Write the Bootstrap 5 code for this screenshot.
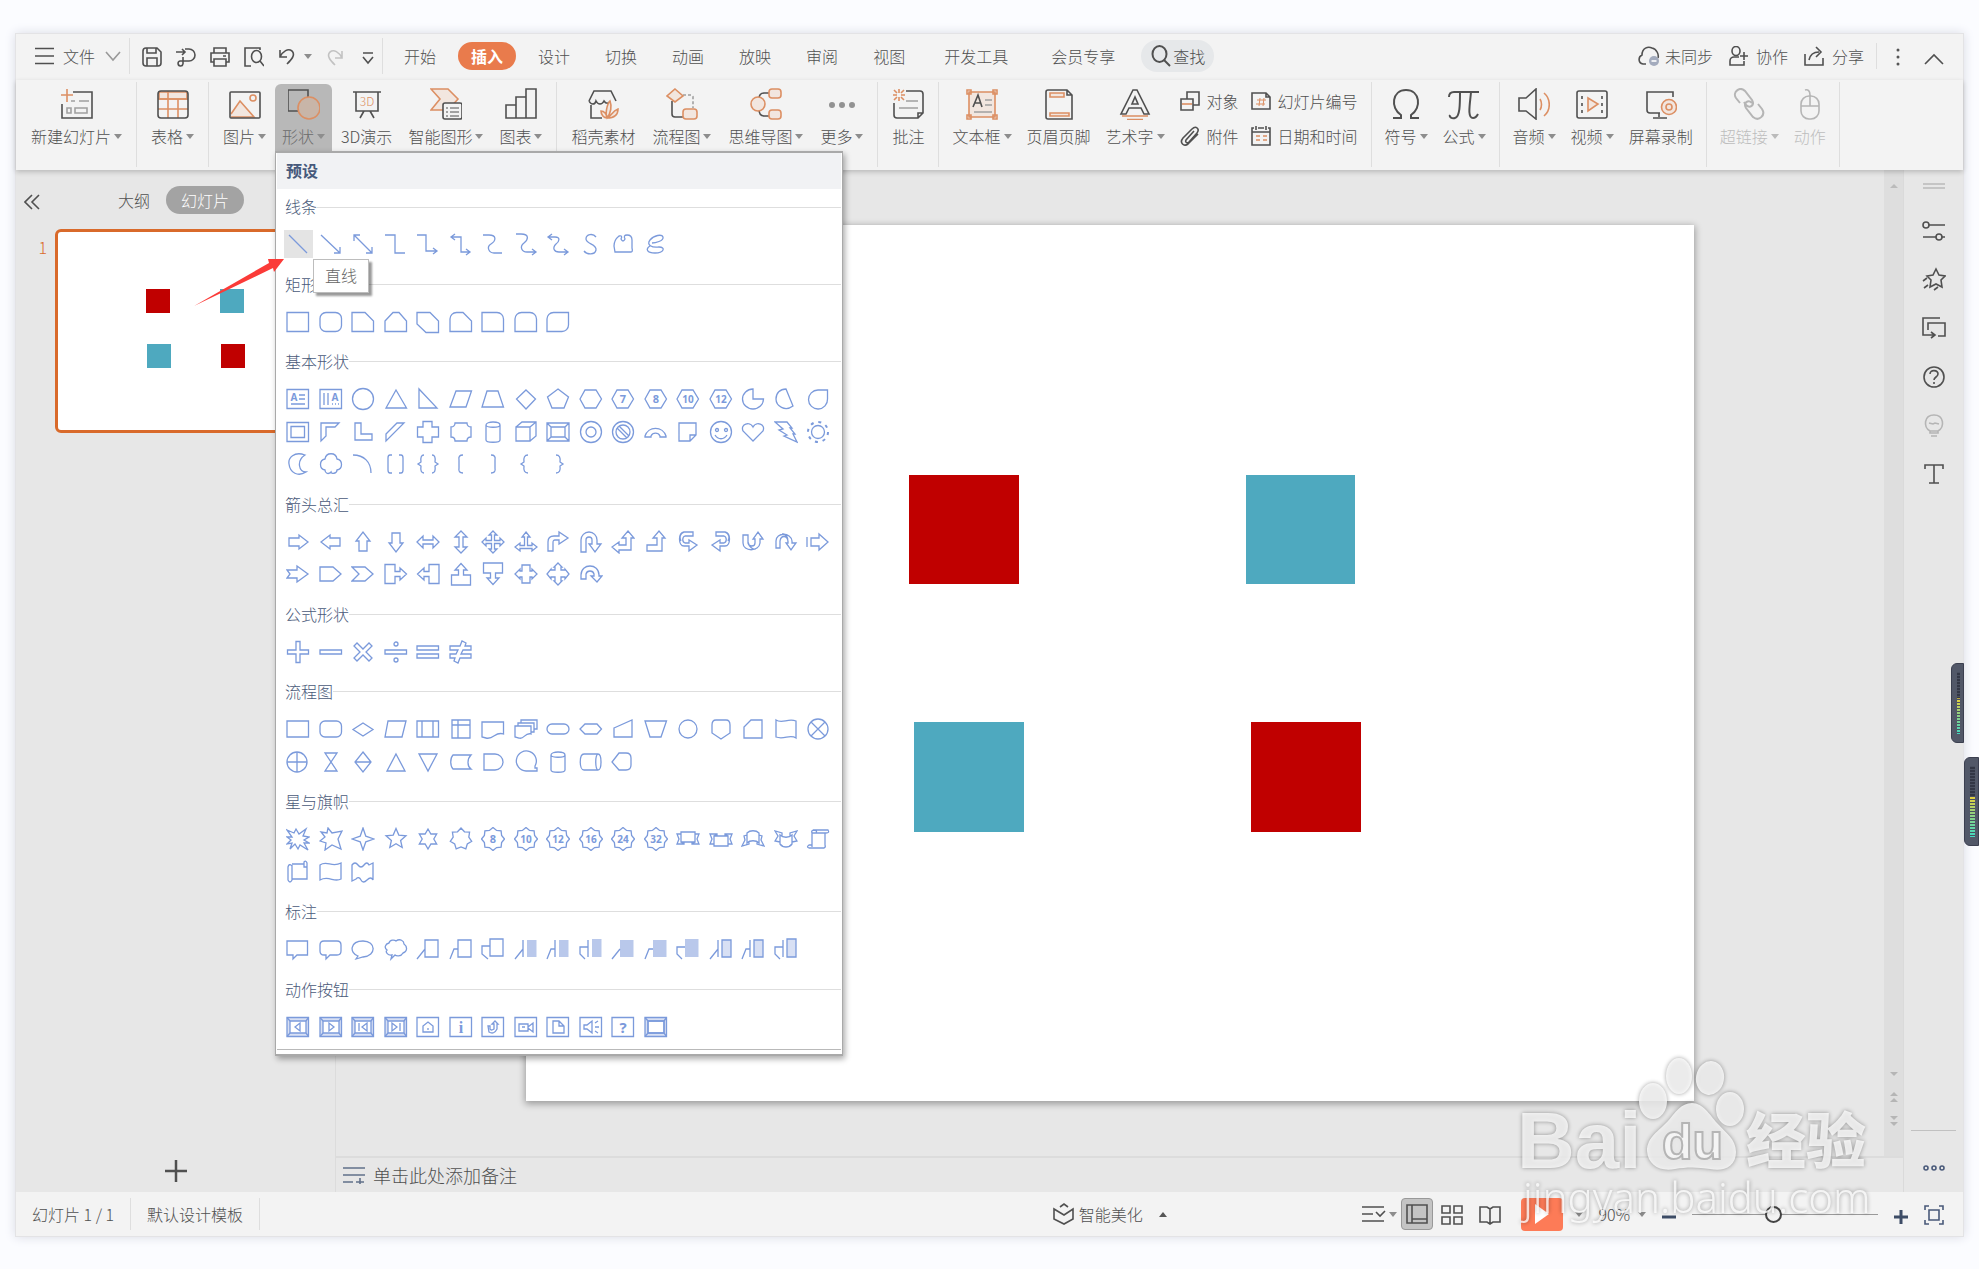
<!DOCTYPE html>
<html lang="zh-CN">
<head>
<meta charset="utf-8">
<meta name="viewport" content="width=device-width, initial-scale=1">
<title>演示文稿</title>
<link href="https://cdn.jsdelivr.net/npm/bootstrap@5.3.0/dist/css/bootstrap.min.css" rel="stylesheet">
<style>
:root{--ink:#505050;--accent:#d96a2b;--bar:#f3f3f3;--pane:#e7e7e7;--rule:#dedede;--navy:#4a5a7a}
body{background:#fbfcff;color:var(--ink);font:16px/20px "Noto Sans CJK SC","Noto Sans",sans-serif;font-weight:300;padding:33px 15px 32px;min-height:100vh;overflow:hidden}
button,a.tab-item{color:inherit;text-decoration:none;background:none;border:0;padding:0;font:inherit;white-space:nowrap}
svg{fill:none;stroke:var(--ink);stroke-width:1.6;flex:none}
svg text{stroke:none}
.app-window{height:calc(100vh - 65px);background:var(--pane);border:1px solid #e3e3e5;box-shadow:0 0 10px #d9dbe4}
.menu-strip{height:46px;background:var(--bar);padding:0 18px 2px 19px}
.quick{gap:14px}
.vline{width:1px;background:var(--rule);align-self:stretch}
.tabs{gap:9px}
.tab-item{padding:4px 13px!important;border-radius:14px}
.tab-item.wide{padding:4px 17px!important}
.tab-item.current{background:#e97b4c;color:#fff;font-weight:700}
.find{height:32px;border-radius:16px;background:#e6e8ea!important;padding:0 9px 0 10px!important}
.caret-sm{display:inline-block;border:4px solid transparent;border-top:5px solid #8d8d8d;border-bottom:0;margin-left:3px;vertical-align:4px}
.caret-sm.up{border-top:0;border-bottom:5px solid #555}
.ribbon{height:90px;background:var(--bar);box-shadow:0 2px 5px #0003;position:relative;z-index:5;padding:2px 0 3px}
.tool-group{padding:2px 7px 0;gap:2px;border-right:1px solid var(--rule)}
.tool-group.first{padding-left:8px}
.tool-group.snug{padding:2px 6px 0;gap:1px}
.tool-group.roomy{gap:3px}
.tool{height:68px;padding:4px 7px 5px!important;display:flex;flex-direction:column;align-items:center;gap:6px;border-radius:6px 6px 0 0;flex:none}
.tool.pressed{background:#b8b8b8;color:#6b6b6b}
.tool svg{width:32px;height:32px}
.tool:disabled{color:#bdbdbd}
.tool:disabled svg{stroke:#b5b5b5}
.stack{padding:7px 7px 0;gap:15px}
.stack button{gap:7px}
.o{stroke:#dc8f63}.of{stroke:#dc8f63;fill:#f2e6df}.g{stroke:#a0a0a0}
.shape-menu{left:0;top:67px;width:568px;border:1px solid #a9a9a9;border-width:2px 1px;border-radius:0;padding:0 0 4px;background:#fff;box-shadow:2px 3px 6px #0005;margin:0;font-size:16px;color:var(--navy)}
.menu-head{background:#f1f2f4;height:36px;line-height:34px;padding-left:9px;font-weight:700;color:#46597b;margin:0 1px}
.section-name{height:36px;display:flex;align-items:center;padding-left:9px;margin:0}
.section-name::after{content:"";flex:1;height:1px;background:#dedede;margin-right:1px}
.shape-grid{display:grid;grid-template-columns:repeat(17,1fr);padding:3px 8px 6px 6px}
.shape-grid button{aspect-ratio:1;display:flex;align-items:center;justify-content:center;padding:2px}
.shape-grid span{width:100%;height:100%;display:flex;align-items:center;justify-content:center}
.shape-grid svg{width:24px;height:24px;stroke:#7b9adb;stroke-width:1.3}
.shape-grid .hover{background:#e4e4e4}
.shape-grid text{fill:#7b9adb;font:700 9px "Noto Sans",sans-serif;text-anchor:middle}
.shape-grid .f{fill:#b9c8eb;stroke:none}.shape-grid .lf{fill:#d8e0f4}
.menu-foot{border-top:1px solid #b9b9b9;margin:0 1px}
.hint{position:absolute;left:37px;top:106px;width:56px;height:34px;line-height:31px;text-align:center;background:#fff;border:1px solid #bdbdbd;box-shadow:3px 3px 2px #0006;color:#666}
.work{min-height:0}
.side-pane{width:320px;border-right:1px solid #dcdcdc}
.side-top{height:59px;padding:0 0 0 8px}
.pill{background:#a3a3a3!important;color:#fff!important;border-radius:14px;height:28px;padding:0 15px!important}
.thumb{width:270px;background:#fff;border:3px solid var(--accent);border-radius:6px;padding:2px 3px}
.face{position:relative;background:#fff;aspect-ratio:4/3}
.sq{position:absolute;width:9.4%;aspect-ratio:1}
.sq.r{background:#c00000}.sq.t{background:#4ea9bf}
.sq.a{left:32.8%;top:28.5%}.sq.b{left:61.6%;top:28.5%}.sq.c{left:33.2%;top:56.7%}.sq.d{left:62.1%;top:56.7%}
.page-one{width:75.5%;box-shadow:0 2px 7px 1px #0005}
.scroller{width:19px;background:#dedede}
.notes{height:36px;border-top:2px solid #dcdcdc;font-size:18px;padding-left:7px}
.tools-right{width:60px;border-left:1px solid #dadada}
.tools-right svg{width:24px;height:24px}
.status{height:44px;background:var(--bar)}
.status .vline{margin:6px 0}
.beautify{margin:0 10% 0 auto}
.viewbtn.on{background:#c4c4c4;border:1px solid #999;border-radius:4px}
.play{width:42px;height:33px;background:#fd7b57!important;border-radius:4px}
.zoom{appearance:none;width:186px;height:18px;background:linear-gradient(#999,#999) center/100% 1px no-repeat}
.zoom::-webkit-slider-thumb{appearance:none;width:17px;height:17px;border:2px solid #444;border-radius:50%;background:#f3f3f3}
.over{position:absolute;z-index:20;pointer-events:none}
.pointer{left:190px;top:255px;width:98px;height:56px}
.brand{right:89px;bottom:34px;width:380px;height:180px;filter:drop-shadow(0 0 2px #0007)}
.meter{width:15px;background:#525868;border:1px solid #3c4050;border-radius:6px 0 0 6px;padding:8px 3px 8px 5px}
.meter.m1{right:15px;top:663px;width:13px;height:80px}.meter.m2{right:0;top:757px;height:89px}
.meter i{display:block;height:100%;background:repeating-linear-gradient(#4a5060 0 1px,#0000 1px 3px),linear-gradient(#333745 42%,#e8d03b 43%,#9ad07a 65%,#42d6bf)}
</style>
<script src="https://cdn.jsdelivr.net/npm/bootstrap@5.3.0/dist/js/bootstrap.bundle.min.js"></script>
</head>
<body>
<main class="app-window d-flex flex-column">
<header class="menu-strip d-flex align-items-center">
  <button class="d-flex align-items-center"><svg width="20" height="20"><path d="M0 2.500H19M0 10H19M0 17.500H19"/></svg><span class="ms-2">文件</span><svg class="ms-2" width="18" height="12" style="stroke:#999"><path d="M3 2l7 8 7-8"/></svg></button>
  <span class="vline my-1 ms-2 me-2"></span>
  <div class="quick d-flex align-items-center ms-1">
    <button aria-label="保存"><svg width="20" height="20"><path d="M4 1H15L19 5V16a3 3 0 0 1-3 3H4a3 3 0 0 1-3-3V4a3 3 0 0 1 3-3ZM5 19V11H15V19M5 1V6H14V1"/></svg></button>
    <button aria-label="输出"><svg width="20" height="20"><path d="M0 5H9M6 2l3 3-3 3M9 2h4a6 6 0 0 1 0 12H7M7 17V10M7 14H4a2.500 2.500 0 1 0 3 3"/></svg></button>
    <button aria-label="打印"><svg width="20" height="20"><path d="M4 6V1H16V6M4 15H1V6H19V15H16M4 12H16V19H4ZM13 9h3"/></svg></button>
    <button aria-label="预览"><svg width="20" height="20"><path d="M7 19H1V1H16V3M16 14l4 5"/><ellipse cx="12.500" cy="9.500" rx="5" ry="6"/></svg></button>
    <button aria-label="撤销" class="d-flex align-items-center"><svg width="18" height="20"><path d="M2 4V11H9M2 11C5 5 10 2 14 5C18 9 13 14 9 18"/></svg><span class="caret-sm ms-2"></span></button>
    <button aria-label="恢复"><svg width="18" height="20" style="stroke:#c2c2c2"><path d="M16 4V11H9M16 11C13 5 8 2 4 5C0 9 5 14 9 18"/></svg></button>
    <button aria-label="更多" class="ms-1"><svg width="12" height="16"><path d="M1 3H11M1 7l5 6 5-6"/></svg></button>
  </div>
  <span class="vline my-1 ms-2"></span>
  <nav class="tabs d-flex align-items-center ms-2">
    <a class="tab-item" href="#">开始</a><a class="tab-item current" href="#">插入</a><a class="tab-item" href="#">设计</a><a class="tab-item" href="#">切换</a><a class="tab-item" href="#">动画</a><a class="tab-item" href="#">放映</a><a class="tab-item" href="#">审阅</a><a class="tab-item" href="#">视图</a><a class="tab-item wide" href="#">开发工具</a><a class="tab-item wide" href="#">会员专享</a>
    <button class="find d-flex align-items-center"><svg width="22" height="22" style="stroke-width:2"><ellipse cx="8.500" cy="9" rx="7" ry="8"/><path d="M13 15l6 6"/></svg>查找</button>
  </nav>
  <div class="d-flex align-items-center ms-auto gap-3">
    <button class="d-flex align-items-center gap-1"><svg width="23" height="20"><path d="M8 18H5C0 17 0 11 4 9C4 2 10 0 14 2C19 3 21 9 20 12"/><circle cx="16" cy="15" r="5" fill="#a3abbd" stroke="none"/><path d="M13.500 15h5" stroke="#fff"/></svg>未同步</button>
    <button class="d-flex align-items-center gap-2"><svg width="19" height="20"><ellipse cx="7" cy="5" rx="4" ry="4.500"/><path d="M10 11H5a4 4 0 0 0-4 4V19H15V15M15 6v8M11 10h8"/></svg>协作</button>
    <button class="d-flex align-items-center gap-2"><svg width="20" height="20"><path d="M1 8V19H19V12M5 14C6 9 9 6 15 6M12 1l5 5-5 5"/></svg>分享</button>
    <span class="vline" style="height:26px;align-self:auto;margin-left:-4px"></span>
    <button aria-label="选项"><svg width="10" height="22" style="fill:#555;stroke:none"><circle cx="5" cy="4" r="1.500"/><circle cx="5" cy="11" r="1.500"/><circle cx="5" cy="18" r="1.500"/></svg></button>
    <button aria-label="收起" class="ms-1"><svg width="22" height="14"><path d="M2 12l9-9 9 9"/></svg></button>
  </div>
</header>

<div class="ribbon d-flex">
  <div class="tool-group first d-flex"><button class="tool"><svg viewBox="0 0 32 32"><path d="M12 4H31V30H1V16"/><path class="g" d="M18 13H28M10 13H14M14 20H26V25H14ZM6 20h4v5H6Z"/><path class="o" d="M6 1V14M0 7H12"/></svg><span>新建幻灯片<i class="caret-sm"></i></span></button></div>
  <div class="tool-group d-flex"><button class="tool"><svg viewBox="0 0 32 32"><path class="of" d="M2 4H30V11H2Z" stroke="none"/><path class="o" d="M1 11H31M1 21H31M11 3V30M21 11V30"/><rect x="1" y="3" width="30" height="27" rx="3"/></svg><span>表格<i class="caret-sm"></i></span></button></div>
  <div class="tool-group d-flex">
    <button class="tool"><svg viewBox="0 0 32 32"><path class="of" d="M2 26L11 13L25 29H2"/><circle class="o" cx="24" cy="10" r="3"/><rect x="1" y="4" width="30" height="26" rx="1"/></svg><span>图片<i class="caret-sm"></i></span></button>
    <div class="position-relative">
      <button class="tool pressed" aria-expanded="true"><svg viewBox="0 0 32 32"><path d="M20 10V2H0V23H10"/><ellipse class="o" cx="21" cy="20" rx="11" ry="11" fill="#c8b5a8"/></svg><span>形状<i class="caret-sm"></i></span></button>
      <div class="dropdown-menu show shape-menu" id="shapes"><div class="menu-head">预设</div></div>
    </div>
    <button class="tool"><svg viewBox="0 0 32 32"><path d="M2 4H30M5 4V23H27V4M13 23l-4 7M19 23l4 7"/><text x="16" y="18" text-anchor="middle" font-size="12" fill="#dc8f63">3D</text></svg><span>3D演示</span></button>
    <button class="tool"><svg viewBox="0 0 32 32"><path class="of" d="M1 1H18L28 11L18 22H1L10 11Z"/><rect x="13" y="15" width="19" height="16" rx="2" fill="#f3f3f3"/><path d="M16 20h2M20 20h9M16 24h2M20 24h9M16 28h2M20 28h9" stroke-width="1"/></svg><span>智能图形<i class="caret-sm"></i></span></button>
    <button class="tool"><svg viewBox="0 0 32 32"><path d="M1 30V17H11V30ZM11 30V9H21V30ZM21 30V1H31V30Z"/></svg><span>图表<i class="caret-sm"></i></span></button>
  </div>
  <div class="tool-group roomy d-flex">
    <button class="tool"><svg viewBox="0 0 32 32"><path d="M2 13L7 3H24L29 13M2 13C4 17 8 17 9 13C11 17 15 17 17 13C19 16 22 16 23 13M4 17V30H15"/><path class="of" d="M20 30C18 26 20 16 23 13C25 18 24 25 20 30ZM20 30C24 29 25 23 31 21C31 27 27 30 20 30ZM20 30C20 26 17 23 14 23C14 27 17 30 20 30Z"/></svg><span>稻壳素材</span></button>
    <button class="tool"><svg viewBox="0 0 32 32"><path d="M6 13V26a3 3 0 0 0 3 3H17"/><path d="M17 7H25a2 2 0 0 1 2 2V20" class="g" stroke-dasharray="3 2"/><path class="of" d="M9 1L17 8L9 14L1 8Z"/><rect class="of" x="17" y="21" width="14" height="10" rx="3"/></svg><span>流程图<i class="caret-sm"></i></span></button>
    <button class="tool"><svg viewBox="0 0 32 32"><path d="M19 5H14C10 5 9 7 9 11M9 21C9 26 11 28 14 28H19"/><ellipse class="of" cx="8" cy="16" rx="7" ry="7"/><rect class="of" x="19" y="1" width="12" height="9" rx="3"/><rect class="of" x="19" y="22" width="12" height="9" rx="3"/></svg><span>思维导图<i class="caret-sm"></i></span></button>
    <button class="tool"><svg viewBox="0 0 32 32" style="fill:#929292;stroke:none"><circle cx="6" cy="17" r="3"/><circle cx="16" cy="17" r="3"/><circle cx="26" cy="17" r="3"/></svg><span>更多<i class="caret-sm"></i></span></button>
  </div>
  <div class="tool-group d-flex"><button class="tool"><svg viewBox="0 0 32 32"><path d="M14 3H28a3 3 0 0 1 3 3V25L26 30H5a3 3 0 0 1-3-3V15M31 25H26V30"/><path class="g" d="M14 13H26M7 20H26"/><path class="o" d="M7 1V5M7 9v4M1 7H5M9 7h4M2 2l3 3M9 9l3 3M12 2L9 5M5 9l-3 3"/></svg><span>批注</span></button></div>
  <div class="tool-group snug d-flex">
    <button class="tool"><svg viewBox="0 0 32 32"><path class="of" d="M3 4H29V29H3Z"/><path class="o" d="M1 2h4v4H1ZM27 2h4v4H27ZM1 27h4v4H1ZM27 27h4v4H27Z"/><path d="M7 19L12 7L16 19M9 15H15"/><path class="g" d="M19 12h7M19 17h7M8 24H26"/></svg><span>文本框<i class="caret-sm"></i></span></button>
    <button class="tool"><svg viewBox="0 0 32 32"><path d="M5 2H24L29 7V31H5a2 2 0 0 1-2-2V4a2 2 0 0 1 2-2ZM24 2V7H29"/><path class="of" d="M7 5H21V9H7ZM7 25H26V28H7Z"/></svg><span>页眉页脚</span></button>
    <button class="tool"><svg viewBox="0 0 32 32"><path d="M14 2H18L30 26H25L22 20H10L7 26H2ZM13 16H19L16 9Z"/><path class="o" d="M3 28H29M8 31.500H24"/></svg><span>艺术字<i class="caret-sm"></i></span></button>
    <div class="stack d-flex flex-column">
      <button class="d-flex align-items-center"><svg width="20" height="20"><path d="M7 8V1H19V14H13M1 8H13V19H1Z"/><path class="o" d="M2 13H12"/></svg>对象</button>
      <button class="d-flex align-items-center"><svg width="20" height="20"><path d="M14 5L6 14C5 16 7 18 9 16L17 7C20 3 16-1 12 3L3 12C-1 17 4 21 8 18L18 8"/></svg>附件</button>
    </div>
    <div class="stack d-flex flex-column ps-1">
      <button class="d-flex align-items-center"><svg width="20" height="20"><path d="M1 2H15L19 6V18H1ZM15 2V6H19"/><path class="o" stroke-width="1" d="M8 15L9 7M12 15l1-8M6 9h9M5 13h9"/></svg>幻灯片编号</button>
      <button class="d-flex align-items-center"><svg width="20" height="20"><path d="M5 4V0M15 4V0M3 2H1V19H19V2H17M7 2h6M1 6H19"/><path class="o" d="M5 10h4M12 10h4M5 14h4M12 14h4"/></svg>日期和时间</button>
    </div>
  </div>
  <div class="tool-group snug d-flex">
    <button class="tool"><svg viewBox="0 0 32 32"><path d="M3 30H11V27C0 20 2 2 16 2S32 20 21 27V30H29" stroke-width="2"/></svg><span>符号<i class="caret-sm"></i></span></button>
    <button class="tool"><svg viewBox="0 0 32 32"><path d="M1 9C1 5 3 4 6 4H31M12 4C12 16 12 29 7 30C4 31 1 29 2 27M23 4C22 16 19 30 25 30C28 30 29 28 30 26" stroke-width="2"/></svg><span>公式<i class="caret-sm"></i></span></button>
  </div>
  <div class="tool-group snug d-flex">
    <button class="tool"><svg viewBox="0 0 32 32"><path d="M1 10H8L18 1V31L8 23H1Z"/><path class="o" d="M22 11C24 14 24 19 22 22M26 5C33 11 33 22 26 28"/></svg><span>音频<i class="caret-sm"></i></span></button>
    <button class="tool"><svg viewBox="0 0 32 32"><rect x="1" y="3" width="30" height="27" rx="2"/><path class="of" d="M12 10L22 16L12 23Z"/><path d="M6 8v3M6 15v3M6 22v3M26 8v3M26 15v3M26 22v3"/></svg><span>视频<i class="caret-sm"></i></span></button>
    <button class="tool"><svg viewBox="0 0 32 32"><path d="M15 25H5a3 3 0 0 1-3-3V4H28V9M14 25V29M8 30H22"/><circle class="of" cx="24" cy="19" r="7.500"/><circle class="o" cx="24" cy="19" r="3"/></svg><span>屏幕录制</span></button>
  </div>
  <div class="tool-group snug d-flex">
    <button class="tool" disabled><svg viewBox="0 0 32 32" style="stroke-width:2"><path d="M7 15L3 10C-1 4 7-2 12 3L19 12C22 17 17 21 13 17L11 14M25 16l4 5C33 27 26 34 20 29L13 20C10 15 15 11 19 15"/></svg><span>超链接<i class="caret-sm" style="border-top-color:#bbb"></i></span></button>
    <button class="tool" disabled><svg viewBox="0 0 32 32"><rect x="7" y="8" width="18" height="23" rx="8"/><path d="M7 18H25M16 18V7C16 3 14 1 11 2"/></svg><span>动作</span></button>
  </div>
</div>

<section class="work d-flex flex-fill">
  <aside class="side-pane d-flex flex-column">
    <div class="side-top d-flex align-items-center">
      <button aria-label="折叠"><svg width="16" height="16"><path d="M8 1L1 8l7 7M15 1L8 8l7 7"/></svg></button>
      <button style="margin-left:78px">大纲</button><button class="pill ms-3">幻灯片</button>
    </div>
    <div class="d-flex"><span class="text-end pe-2 pt-2" style="width:39px;color:#d96a2b">1</span>
      <div class="thumb"><div class="face"><i class="sq r a"></i><i class="sq t b"></i><i class="sq t c"></i><i class="sq r d"></i></div></div></div>
    <button class="mt-auto mx-auto mb-2" aria-label="新建"><svg width="24" height="26" stroke-width="2"><path style="stroke-width:2.500" d="M12 2V24M1 13H23"/></svg></button>
  </aside>
  <div class="d-flex flex-column flex-fill">
    <div class="d-flex flex-fill">
      <div class="d-flex flex-fill align-items-center justify-content-center"><div class="face page-one"><i class="sq r a"></i><i class="sq t b"></i><i class="sq t c"></i><i class="sq r d"></i></div></div>
      <div class="scroller d-flex flex-column align-items-center pt-2"><svg width="8" height="14" style="fill:#bbb;stroke:none"><path d="M0 10l4-4 4 4z"/></svg><svg class="mt-auto mb-4" width="8" height="60" style="fill:#b5b5b5;stroke:none"><path d="M0 0h8L4 4zM0 24l4-4 4 4zM0 30l4-4 4 4zM0 44h8l-4 4zM0 50h8l-4 4z"/></svg></div>
    </div>
    <div class="notes d-flex align-items-center"><button class="d-flex align-items-center gap-2"><svg width="22" height="18" style="stroke:#62718a"><path d="M0 2H22M0 9H22M0 16H10M13 16h8M17 12v7"/></svg>单击此处添加备注</button></div>
  </div>
  <aside class="tools-right d-flex flex-column align-items-center">
    <svg class="mt-1" viewBox="0 0 24 24" style="stroke:#bbb"><path d="M1 10H23M1 14H23"/></svg>
    <div class="d-flex flex-column gap-4 mt-3 pt-1">
      <button aria-label="设置"><svg viewBox="0 0 24 24"><circle cx="4" cy="6" r="3"/><circle cx="17" cy="18" r="3"/><path d="M7 6H23M1 18H14M20 18h3"/></svg></button>
      <button aria-label="动画"><svg viewBox="0 0 24 24"><path d="M14 2l3 6 6 1-4 4 1 7-6-3-6 3 1-7-4-4 6-1ZM1 14l4-3M2 21l4-3M12 23l4-3"/></svg></button>
      <button aria-label="切换"><svg viewBox="0 0 24 24"><path d="M18 2H1V19H12M9 16l4 3-4 3M6 14V7H23V20H16"/></svg></button>
      <button aria-label="帮助"><svg viewBox="0 0 24 24"><circle cx="12" cy="12" r="10"/><path d="M8 9C8 4 16 5 16 9C16 12 12 12 12 15M12 17v2"/></svg></button>
      <button aria-label="灵感"><svg viewBox="0 0 24 24" style="stroke:#b5b5b5"><path d="M8 18C1 14 2 2 12 2S23 14 16 18ZM8 18v2h8v-2M9 23h6M7 10l4 1 2-1 4 1"/></svg></button>
      <button aria-label="文字"><svg viewBox="0 0 24 24"><path d="M3 7V3H21V7M12 3V21M7 21H17"/></svg></button>
    </div>
    <hr class="mt-auto w-75 mb-4"><button class="pb-1 mb-2" aria-label="更多"><svg viewBox="0 0 24 24" style="stroke:#4a5a7a"><circle cx="4" cy="12" r="2"/><circle cx="12" cy="12" r="2"/><circle cx="20" cy="12" r="2"/></svg></button>
  </aside>
</section>

<footer class="status d-flex align-items-center">
  <span class="ms-3 me-3 text-nowrap">幻灯片 1 / 1</span><span class="vline"></span><span class="mx-3 text-nowrap">默认设计模板</span><span class="vline"></span>
  <button class="beautify d-flex align-items-center"><svg class="me-1" width="22" height="22"><path d="M7 4l4-3 4 3M1 6V16l10 5 9-5V6l-9 6Z"/></svg>智能美化<i class="caret-sm up ms-3"></i></button>
  <div class="d-flex align-items-center" style="padding-right:19px">
    <button aria-label="备注" class="me-1 d-flex align-items-center"><svg width="24" height="20"><path d="M0 3H22M0 10H11M0 17H22M14 8l4 4 5-5"/></svg><i class="caret-sm"></i></button>
    <button aria-label="普通视图" class="viewbtn on d-flex p-1"><svg width="22" height="22"><path d="M1 2H21V20H1ZM6 2V20M6 16H21"/></svg></button>
    <button aria-label="浏览视图" class="ms-2"><svg width="22" height="20"><path d="M1 1H9V8H1ZM13 1H21V8H13ZM1 12H9V19H1ZM13 12H21V19H13Z"/></svg></button>
    <button aria-label="阅读视图" class="mx-3 pe-1"><svg width="22" height="20"><path d="M11 4L8 2H1V17H8L11 19L14 17H21V2H14ZM11 4V19"/></svg></button>
    <button aria-label="放映" class="play d-flex align-items-center justify-content-center me-1"><svg width="16" height="20" style="fill:#fff;stroke:none"><path d="M1 0l14 10L1 20z"/></svg></button><i class="caret-sm ms-2"></i>
    <button class="ms-3">90%<i class="caret-sm ms-2"></i></button>
    <button aria-label="缩小" class="ms-3"><svg width="14" height="14"><path style="stroke:#3d4c66;stroke-width:3" d="M0 7H14"/></svg></button>
    <input class="zoom mx-3" type="range" aria-label="缩放" min="0" max="100" value="43">
    <button aria-label="放大"><svg width="14" height="14"><path style="stroke:#3d4c66;stroke-width:3" d="M0 7H14M7 0V14"/></svg></button>
    <button aria-label="适应窗口" class="ms-3"><svg width="20" height="20" style="stroke:#4a5a7a"><path d="M1 5V1H5M15 1h4V5M19 15v4H15M5 19H1V15M5 5H15V15H5Z"/></svg></button>
  </div>
</footer>
</main>

<svg class="over pointer" viewBox="0 0 98 56" style="fill:#fb3b38;stroke:none"><path d="M4 51L79 8L78 4L94 4L84 17L83 13Z"/></svg>
<svg class="over brand" viewBox="0 0 380 180" style="fill:#fff;fill-opacity:.78;stroke:none">
  <text x="7" y="113" font-family="Liberation Sans, sans-serif" font-weight="700" font-size="80">Bai</text>
  <ellipse cx="143" cy="46" rx="14" ry="18"/><ellipse cx="169" cy="21" rx="13" ry="18"/><ellipse cx="200" cy="23" rx="14" ry="17" transform="rotate(10 200 23)"/><ellipse cx="220" cy="54" rx="14" ry="17"/>
  <path d="M182 48C193 48 200 60 207 68C216 78 226 84 226 97C226 112 213 117 200 114C188 112 176 112 165 114C150 117 138 110 137 96C137 82 149 76 158 66C165 58 171 48 182 48Z"/>
  <text x="152" y="104" font-family="Liberation Sans, sans-serif" font-weight="700" font-size="50" style="fill:#f7f7f7;stroke:#b5b5b5;stroke-width:2">du</text>
  <text x="236" y="108" font-family="Noto Sans CJK SC, sans-serif" font-weight="900" font-size="60">经验</text>
  <text x="13" y="158" font-family="Noto Sans, sans-serif" font-size="42">jingyan.baidu.com</text>
</svg>
<div class="over meter m1"><i></i></div><div class="over meter m2"><i></i></div>

<script>
// Regular star polygon: n points, outer radius R, inner radius r.
const star=(n,R,r,cx=12,cy=12)=>{let d='';for(let i=0;i<2*n;i++){const a=Math.PI*i/n-Math.PI/2,q=i%2?r:R;d+=(i?'L':'M')+(cx+q*Math.cos(a)).toFixed(1)+' '+(cy+q*Math.sin(a)).toFixed(1)}return d+'Z'};
const P=d=>`<path d="${d}"/>`, T=(s,size=11)=>`<text x="12" y="16" style="font-size:${size}px">${s}</text>`;
const hex='M1 12L6 3H17L22.500 12L17 21H6Z', box='M1 2.500H22.500V21.500H1Z';
const bevel=s=>`<path class="lf" d="${box}"/><path fill="#fff" d="M4 6H20V18H4Z"/>`+P('M1 2.500L4 6M22.500 2.500L20 6M1 21.500L4 18M22.500 21.500L20 18')+P(s);
const btn=s=>P(box)+s, badge=s=>P(star(8,11.5,9.3))+T(s,s.length>1?10:11);
// Turns an outline by a number of degrees about the cell centre.
const rot=(d,a)=>`<path d="${d}" transform="rotate(${a} 12 12)"/>`;
const arrow='M3 8H13V5L22 12L13 19V16H3Z', twin='M1 12L7 6V10H17V6L23 12L17 18V14H7V18Z', push='M1 2.500H11V9.500H16V6L22.500 12L16 18V14.500H11V21.500H1Z';
const uturn='M2 22V10a7.500 7.500 0 0 1 16 0V14H22L16 22L10 14H13V10a3 3 0 0 0-6 0V22Z', bend='M2 21V12C2 8 4 6 8 6H13V2L22 8L13 14V10H9C7 10 7 11 7 13V21Z';
const upTurn='M3 15H13V8H9L15 1L21 8H18V21H3Z', curl='M17 2H8C2 2 2 16 8 16H13V21L21 15L13 10V13H9C6 12 6 7 9 6H17ZM8 2C4 3 3 8 5 11';
const ban='M5 5H19V15H5ZM5 7H1L3 12L1 17H8V15M19 7H23L21 12L23 17H16V15M5 15L8 17M19 15L16 17';
const four='M12 1L16 5H13.500V10.500H19V8L23 12L19 16V13.500H13.500V19H16L12 23L8 19H10.500V13.500H5V16L1 12L5 8V10.500H10.500V5H8Z';
const cyl='M5 5V20C5 23 19 23 19 20V5M5 5C5 1 19 1 19 5C19 8 5 8 5 5Z';
const sections=[
['线条',['M3 3L21 21','M2 3L21 21M21 15V21H15','M3 3L21 21M3 9V3H9M21 15V21H15','M1 3H11V21H21','M1 3H10V19H21M17 16L21 19L17 22','M2 5H12V20H21M6 2L2 5L6 8M17 17L21 20L17 23','M2 3H8C16 3 15 9 10 12C5 15 8 21 13 21H21','M2 2H7C16 2 14 8 10 11C5 15 8 20 13 20H22M18 17L22 20L18 23','M2 5H9C15 5 13 10 10 12C6 16 8 20 13 20H22M6 2L2 5L6 8M18 17L22 20L18 23','M17 5C14 1 7 2 7 7C7 12 18 12 17 18C16 23 8 23 5 19','M4 20H20Q22 20 21 16V8Q21 3 16 3Q12 3 14 7Q12 11 10 7Q12 3 8 4Q3 8 3 14Z','M6 14C1 17 3 21 11 21C20 21 22 15 15 15C8 16 2 13 6 8C10 3 18 2 19 5C20 9 11 11 8 11']],
['矩形',[box,'M7 2.500H16.500a6 6 0 0 1 6 6V15.500a6 6 0 0 1-6 6H7a6 6 0 0 1-6-6V8.500a6 6 0 0 1 6-6Z','M1 2.500H14L22.500 11V21.500H1Z','M1 11L9 2.500H15L22.500 11V21.500H1Z','M1 2.500H14L22.500 11V22.500H10L1 14Z','M1 21.500V9a6.500 6.500 0 0 1 6.500-6.500H14L22.500 11V21.500Z','M1 2.500H16a6.500 6.500 0 0 1 6.500 6.500V21.500H1Z','M1 21.500V9a6.500 6.500 0 0 1 6.500-6.500H16a6.500 6.500 0 0 1 6.500 6.500V21.500Z','M1 21.500V9a6.500 6.500 0 0 1 6.500-6.500H22.500V15a6.500 6.500 0 0 1-6.500 6.500Z']],
['基本形状',[btn('<text x="8" y="14" style="font-size:10px">A</text>'+P('M13 8H19M13 12H19M5 17H19')),btn('<text x="16" y="14" style="font-size:10px">A</text>'+P('M5 6V18M9 6V18M13 17h1M16 17h1M19 17h1')),'<circle cx="12" cy="12" r="10.500"/>','M12 3L22.500 21H2Z','M3 2V21H21Z','M7 4H22.500L17 20H1Z','M6 4H17L22.500 20H1Z','M12 3L21.500 12L12 22L2.500 12Z','M12 2L22.500 10L18 21H6L1.500 10Z',hex,P(hex)+T('7'),P(hex)+T('8'),P(hex)+T('10',10),P(hex)+T('12',10),'M12 2V12H22.500A10.500 10 0 1 1 12 2Z','M12 2L19 19C11 25 2 19 2 12C2 6 6 2 12 2Z','M12 3H21.500V12A9.500 9.500 0 1 1 12 3Z',
box+'M5 6.500H18.500V17.500H5Z','M2 3H20L16 7H7V16L2 21Z','M4 3V20H21V14H10V3Z','M2 14L13 3H20L2 21Z','M7 1.500H16V7H22.500V17H16V22.500H7V17H1.500V7H7Z','M6 3H18C18 6 20 7 22 7V17C20 17 18 18 18 21H6C6 18 4 17 2 17V7C4 7 6 6 6 3Z',cyl,'M2 7H16V21H2ZM2 7L8 2H22V16L16 21M16 7L22 2','M1 3H23V21H1ZM5 7H19V17H5ZM1 3L5 7M23 3L19 7M1 21L5 17M23 21L19 17','<circle cx="12" cy="12" r="10.500"/><circle cx="12" cy="12" r="5"/>','<circle cx="12" cy="12" r="10.500"/>'+P('M6 8L16 18M8 6L18 16')+'<circle cx="12" cy="12" r="7"/>','M1 17V16a11 11 0 0 1 21 0v1H16V16a5 5 0 0 0-9 0v1Z','M3 3H20V15L14 21H3ZM20 15H14V21','<circle cx="12" cy="12" r="10.500"/><circle cx="8" cy="10" r="1.500"/><circle cx="17" cy="10" r="1.500"/>'+P('M6 15C9 20 15 20 18 15'),'M12 21L2 11C-1 4 9 1 12 7C15 1 25 4 22 11Z','M1 2H13L18 8H16L21 14H19L23 22L10 16L13 15L5 10L9 9Z','<circle cx="12" cy="12" r="6.500"/><circle cx="12" cy="12" r="10" stroke-width="2" stroke-dasharray="3 4.854"/>',
'M19 3C8 -1 2 6 3 12C4 21 12 25 20 20C13 20 10 9 19 3Z','M6 7C7 0 17 0 18 7C24 8 24 17 18 18C18 22 12 22 12 20C9 23 6 21 6 18C0 17 0 8 6 7Z','M2 3C13 3 20 10 20 21','M8 3H6Q4 3 4 6V18Q4 21 6 21H8M15 3H17Q19 3 19 6V18Q19 21 17 21H15','M8 3Q4 3 5 10L2 12L5 14Q4 21 8 21M16 3Q20 3 19 10L22 12L19 14Q20 21 16 21','M14 3Q9 3 10 8V16Q9 21 14 21','M10 3Q15 3 14 8V16Q15 21 10 21','M14 3Q9 3 10 10L7 12L10 14Q9 21 14 21','M10 3Q15 3 14 10L17 12L14 14Q15 21 10 21']],
['箭头总汇',[arrow,rot(arrow,180),rot(arrow,270),rot(arrow,90),twin,rot(twin,90),four,'M12 2L16 7H13.500V15.500H18V13L23 17L18 21V18.500H6V21L1 17L6 13V15.500H10.500V7H8Z',bend,uturn,'M17 1L23 8H20V20H8V23L1 17L8 12V15H15V8H11Z',upTurn,curl,`<path d="${curl}" transform="translate(24 0) scale(-1 1)"/>`,'M2 5V13C2 22 18 22 19 13V9H22L17 2L12 9H14V13C14 17 8 17 7 13V5ZM7 5V12C8 17 12 20 15 19','M2 18V11C2 2 17 2 18 11V13H22L17 20L12 13H14V11C13 5 7 5 6 11V18ZM8 4C13 4 14 8 14 12','M1 7V17M5 8H13V4L22 12L13 20V16H5Z',
'M1 8H11V4L22 12L11 20V16H1L4 12Z','M1 5H14L22 12L14 19H1Z','M1 5H14L22 12L14 19H1L8 12Z',push,rot(push,180),rot(push,270),rot(push,90),'M8 3H16V9H18V7L23 12L18 17V15H16V21H8V15H6V17L1 12L6 7V9H8Z','M12 1L16 5H15V8H19V7L23 12L19 17V15H15V19H16L12 23L8 19H9V15H5V17L1 12L5 7V8H9V5H8Z','M2 17V13C2 1 20 1 20 13V14H23L18 20L12 14H15V12C14 8 8 8 7 12V17Z']],
['公式形状',['M10 1.500H14V10H22.500V14H14V22.500H10V14H1.500V10H10Z','M1 10H22.500V14H1Z','M3 6L6 3L12 9L18 3L21 6L15 12L21 18L18 21L12 15L6 21L3 18L9 12Z','<path d="M1 10H22.500V14H1Z"/><circle cx="12" cy="4" r="2"/><circle cx="12" cy="20" r="2"/>','M1 6H22.500V10H1ZM1 14H22.500V18H1Z','M1 6H11L13 1L17 3L16 6H22V10H14L12 14H22V18H11L9 23L5 21L6 18H1V14H7L9 10H1Z']],
['流程图',['M1 4H22.500V20H1Z','M6 4H17.500a5 5 0 0 1 5 5V15a5 5 0 0 1-5 5H6a5 5 0 0 1-5-5V9a5 5 0 0 1 5-5Z','M12 6L22 12.500L12 19L2 12.500Z','M4 4H22L18 20H1Z','M1 4H22.500V20H1ZM6 4V20M17 4V20','M3 3H21V21H3ZM9 3V21M3 8H21','M1 5H22.500V17C14 14 13 23 5 21L1 20Z','M1 9H17V17C11 15 10 23 5 21L1 20ZM4 9V6H20V15H17M7 6V3H23V12H20','M6 7H18a5 5 0 0 1 0 10H6a5 5 0 0 1 0-10Z','M6 7H18L22.500 12L18 17H6L1 12Z','M3 11L21 3V20H3Z','M1 4H22.500L17 20H6Z','<circle cx="12" cy="12" r="9"/>','M3 8Q3 3 7 3H17Q21 3 21 8V16L12 22L3 16Z','M10 3H21V21H3V10Z','M2 3C8 7 14 1 22 4V21C16 17 10 23 2 20Z','<circle cx="12" cy="12" r="10"/>'+P('M5 5L19 19M19 5L5 19'),
'<circle cx="11" cy="12" r="10"/>'+P('M1 12H21M11 2V22'),'M6 3H18L6 21H18Z','M12 2L20 12L12 22L4 12ZM4 12H20','M12 4L21 21H3Z','M3 4H21L12 21Z','M4 5H22C18 9 18 16 22 19H4C1 16 1 8 4 5Z','M3 4H14a8 8 0 0 1 0 16H3Z','M22 21H12A10 10 0 1 1 21 16V18H23V21Z',cyl,'M5 4H19C23 4 23 20 19 20H5C0 20 0 4 5 4ZM19 4C16 5 16 19 19 20','M8 3H15Q20 3 20 8V15Q20 20 15 20H8L1 12Z']],
['星与旗帜',['M1 3L8 6L10 2L13 7L20 2L17 9L23 10L18 13L23 16L18 16L22 23L14 18L12 22L9 17L4 22L6 16L1 17L5 13L1 10L6 10Z','M9 1L13 6L23 4L19 12L22 22L13 18L6 23L7 16L1 14L6 10L2 5L8 6Z',star(4,11,4),star(5,10.5,4.8),star(6,10,5.8),star(7,11,8),badge('8'),badge('10'),badge('12'),badge('16'),badge('24'),badge('32'),ban,`<path d="${ban}" transform="rotate(180 12 12)"/>`,'M6 6C9 3 15 3 18 6V16C15 13 9 13 6 16ZM6 8L3 9L4 13L1 19L8 17V14M18 8L21 9L20 13L23 19L16 17V14','M6 8C9 11 15 11 18 8V17C15 21 9 21 6 17ZM8 9V6L1 4L4 9L1 14L6 15M16 9V6L23 4L20 9L23 14L18 15','M7 3H22Q24 6 20 6H10Q12 3 7 3ZM6 6V18H3Q0 20 3 21H18Q20 20 19 18V6M6 18V20M7 3Q5 4 6 6H10',
'M6 4H18V2Q20 0 21 3V19H6M6 5V20Q4 24 2 20V7Q3 3 6 6ZM18 4V7H21','M1 5C8 0 13 8 22 3V19C15 23 10 15 1 20Z','M1 5Q4 1 7 5T13 5T18 5L22 3V20Q20 16 16 20T10 20T5 19L1 21Z']],
['标注',['M1 4H21.500V18H11L7 22V18H1Z','M5 4H18Q22 4 22 8V14Q22 18 18 18H11L7 22V18H5Q1 18 1 14V8Q1 4 5 4Z','M7 19L5 22L12 20C26 19 25 4 12 4C-1 4-2 16 7 19Z','M5 6C6 2 11 3 12 4C16 1 20 4 20 7C24 10 23 15 19 16C17 20 12 19 11 18L7 22L8 18C4 19 1 15 3 13C0 11 1 7 5 6Z','M9 3H22V20H9ZM1 22L9 12','M9 3H22V20H9ZM9 12H5L1 22','M9 2H22V19H9ZM9 9H1V17L7 22',
...[0,1,2].map(i=>`<path class="f" d="M13 ${i==2?2:3}H22.500V20H13Z"/>`+P('M9 3V20'+['M1 22L9 12','M9 12H5L1 22','M9 10H1V17L6 22'][i])),
...[0,1,2].map(i=>`<path class="f" d="M9 ${i==2?2:3}H22.500V20H9Z"/>`+P(['M1 22L9 12','M9 12H5L1 22','M9 10H1V17L6 22'][i])),
...[0,1,2].map(i=>`<path class="lf" d="M13 ${i==2?2:3}H22V20H13Z"/>`+P('M9 3V20'+['M1 22L9 12','M9 12H5L1 22','M9 10H1V17L6 22'][i]))]],
['动作按钮',[bevel('M14 8V16L9 12Z'),bevel('M10 8V16L15 12Z'),bevel('M16 8V16L11 12ZM8 8V16'),bevel('M8 8V16L13 12ZM16 8V16'),btn(P('M7 17V11L12 7L17 11V17ZM12 13v2')),btn('<text x="12" y="17.500" style="font:700 16px Liberation Serif">i</text>'),btn(P('M7 11H9V14Q10 16 13 14V9H11L14 6L17 9H16V14Q13 20 8 17Z')),btn(P('M5 9H14V16H5ZM14 12L19 8V17L14 13M8 12h3')),btn(P('M7 6H13L18 11V18H7ZM13 6V11H18')),btn(P('M5 10H8L13 6V18L8 14H5ZM16 8L19 6M16 12H20M16 16L19 18')),btn('<text x="12" y="17.500" style="font-size:15px">?</text>'),bevel('M4 6H20V18H4Z')]]
];
const menu=document.getElementById('shapes');
menu.insertAdjacentHTML('beforeend',sections.map(([name,list],k)=>`<h6 class="section-name fs-6 fw-light">${name}</h6><div class="shape-grid">`+list.map((s,i)=>`<button aria-label="${name} ${i+1}"><span class="${k+i?'':'hover'}"><svg viewBox="0 0 24 24">${s[0]=='M'?P(s):s}</svg></span></button>`).join('')+'</div>').join('')+'<div class="menu-foot"></div><div class="hint">直线</div>');
</script>
</body>
</html>
